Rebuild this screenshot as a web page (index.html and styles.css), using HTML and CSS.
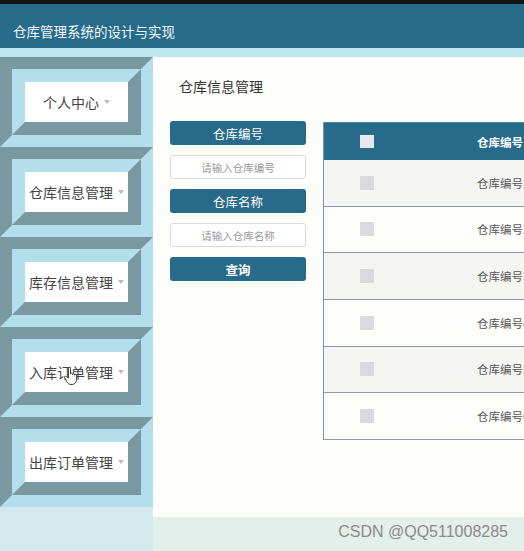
FILE: index.html
```html
<!DOCTYPE html>
<html lang="zh-CN">
<head>
<meta charset="utf-8">
<title>仓库管理系统的设计与实现</title>
<link rel="stylesheet" href="styles.css">
</head>
<body>
<div class="topstrip"></div>
<header class="header"><h1 class="title">仓库管理系统的设计与实现</h1></header>
<div class="subbar"></div>
<div class="layout">
  <aside class="sidebar">
    <nav class="menu">
      <div class="menu-item"><div class="menu-inner"><div class="menu-face"><span>个人中心</span><i class="caret"></i></div></div></div>
      <div class="menu-item"><div class="menu-inner"><div class="menu-face"><span>仓库信息管理</span><i class="caret"></i></div></div></div>
      <div class="menu-item"><div class="menu-inner"><div class="menu-face"><span>库存信息管理</span><i class="caret"></i></div></div></div>
      <div class="menu-item"><div class="menu-inner"><div class="menu-face"><span>入库订单管理</span><i class="caret"></i>
        <svg class="cursor" width="15" height="20" viewBox="0 0 15 20"><path d="M5.5 12 L5.5 2.2 C5.5 0.9 7.5 0.9 7.5 2.2 L7.5 8 C7.5 6.8 9.5 6.8 9.5 8 L9.5 8.6 C9.5 7.4 11.5 7.4 11.5 8.6 L11.5 9.2 C11.5 8 13.5 8 13.5 9.2 L13.5 13.5 C13.5 16.5 11.5 18.5 9 18.5 L8 18.5 C6 18.5 5 17.5 4 16 L1.6 11.8 C0.9 10.6 2.4 9.6 3.4 10.6 Z" fill="#fff" fill-opacity="0.85" stroke="#444" stroke-width="1"/></svg>
      </div></div></div>
      <div class="menu-item"><div class="menu-inner"><div class="menu-face"><span>出库订单管理</span><i class="caret"></i></div></div></div>
    </nav>
    <div class="sidebar-rest"></div>
  </aside>
  <main class="main">
    <section class="content">
      <h2 class="page-title">仓库信息管理</h2>
      <div class="panel">
        <form class="search">
          <div class="label-btn">仓库编号</div>
          <input class="field" type="text" placeholder="请输入仓库编号">
          <div class="label-btn">仓库名称</div>
          <input class="field" type="text" placeholder="请输入仓库名称">
          <button class="query" type="button">查询</button>
        </form>
        <div class="grid">
          <div class="row head"><span class="check head-check"></span><span class="cell">仓库编号</span><span class="cell">仓库名称</span></div>
          <div class="row odd"><span class="check"></span><span class="cell">仓库编号1</span><span class="cell">仓库名称1</span></div>
          <div class="row even"><span class="check"></span><span class="cell">仓库编号2</span><span class="cell">仓库名称2</span></div>
          <div class="row odd"><span class="check"></span><span class="cell">仓库编号3</span><span class="cell">仓库名称3</span></div>
          <div class="row even"><span class="check"></span><span class="cell">仓库编号4</span><span class="cell">仓库名称4</span></div>
          <div class="row odd"><span class="check"></span><span class="cell">仓库编号5</span><span class="cell">仓库名称5</span></div>
          <div class="row even"><span class="check"></span><span class="cell">仓库编号6</span><span class="cell">仓库名称6</span></div>
        </div>
      </div>
    </section>
    <footer class="footer">CSDN @QQ511008285</footer>
  </main>
</div>
</body>
</html>
```

FILE: styles.css
```css
html, body {
  margin: 0;
  height: 551px;
  overflow: hidden;
}
body {
  width: 524px;
  font-family: "Noto Sans CJK SC", "Microsoft YaHei", sans-serif;
  background: #fdfdfa;
}
.topstrip {
  height: 4px;
  background: #121413;
}
.header {
  height: 44px;
  box-sizing: border-box;
  padding: 18px 0 0 13px;
  background: #276a8a;
}
.title {
  margin: 0;
  font-size: 13.5px;
  line-height: 18px;
  font-weight: normal;
  color: #f4f8fa;
}
.subbar {
  height: 9px;
  background: #bde4ef;
}
.layout {
  display: grid;
  grid-template-columns: 153px 1fr;
  height: 494px;
}
.sidebar {
  display: flex;
  flex-direction: column;
  background: #b3dfec;
}
.menu-item {
  height: 90px;
  box-sizing: border-box;
  border: 12px solid;
  border-color: #7a98a2 #b3dfec #b3dfec #7a98a2;
}
.menu-inner {
  height: 100%;
  box-sizing: border-box;
  border: 13px solid;
  border-color: #b3dfec #7a98a2 #7a98a2 #b3dfec;
}
.menu-face {
  position: relative;
  height: 100%;
  background: #fff;
  display: flex;
  align-items: center;
  justify-content: center;
  font-size: 14px;
  color: #444;
}
.caret {
  width: 0;
  height: 0;
  margin-left: 5px;
  border-left: 3.5px solid transparent;
  border-right: 3.5px solid transparent;
  border-top: 4px solid #bcbcbc;
}
.cursor {
  position: absolute;
  left: 38px;
  top: 14px;
}
.sidebar-rest {
  flex: 1;
  background: #d3e9ee;
}
.main {
  display: flex;
  flex-direction: column;
  min-width: 0;
  overflow: hidden;
}
.content {
  flex: 1;
  padding: 19px 0 0 17px;
  background: #fdfdfa;
  overflow: hidden;
}
.page-title {
  margin: 0 0 0 9px;
  font-size: 14px;
  line-height: 20px;
  font-weight: normal;
  color: #333;
}
.panel {
  display: flex;
  align-items: flex-start;
  gap: 17px;
  margin-top: 25px;
}
.search {
  flex: none;
  width: 136px;
  margin: 0;
  display: flex;
  flex-direction: column;
  gap: 10px;
}
.label-btn, .query {
  height: 24px;
  border-radius: 3px;
  background: #276a8a;
  color: #fff;
  font-size: 12.5px;
  display: flex;
  align-items: center;
  justify-content: center;
}
.query {
  border: 0;
  padding: 0;
  font-family: inherit;
  font-weight: bold;
}
.field {
  height: 24px;
  box-sizing: border-box;
  margin: 0;
  padding: 0;
  border: 1px solid #dadada;
  border-radius: 3px;
  background: #fff;
  font-family: inherit;
  font-size: 10.5px;
  text-align: center;
  color: #777;
}
.field::placeholder {
  color: #9a9a9a;
}
.grid {
  flex: none;
  width: 420px;
  margin-top: 1px;
  border-left: 1px solid #7897a3;
}
.row {
  display: grid;
  grid-template-columns: 86px 187px 1fr;
  align-items: center;
  height: 46.67px;
  box-sizing: border-box;
  border-bottom: 1px solid #7f9ca7;
  font-size: 11.5px;
  color: #555;
}
.row.head {
  height: 38px;
  background: #276a8a;
  border-top: 1px solid #4a86a2;
  border-bottom: 0;
  color: #fff;
  font-weight: bold;
}
.row.odd {
  background: #f5f5f3;
}
.row.even {
  background: #fdfdfb;
}
.check {
  justify-self: center;
  width: 14px;
  height: 14px;
  background: #d8dadc;
}
.head-check {
  height: 13px;
  background: #e6e9eb;
}
.cell {
  padding-left: 67px;
  white-space: nowrap;
}
.footer {
  height: 34px;
  box-sizing: border-box;
  padding: 6px 16px 0 0;
  background: #e3efea;
  text-align: right;
  font-family: "Liberation Sans", Arial, sans-serif;
  font-size: 16px;
  line-height: 18px;
  color: #8a8a8a;
}
```
